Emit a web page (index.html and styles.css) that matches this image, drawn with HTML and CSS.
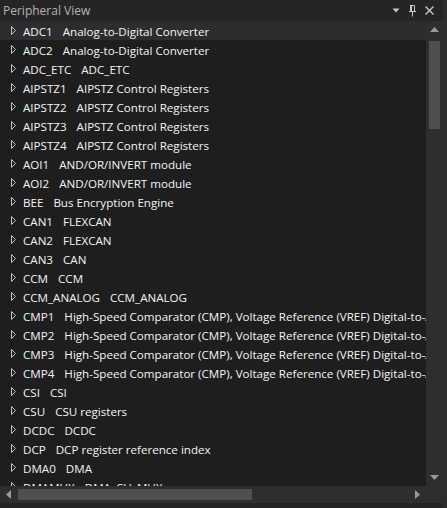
FILE: index.html
```
<!DOCTYPE html>
<html>
<head>
<meta charset="utf-8">
<link rel="stylesheet" href="styles.css">
</head>
<body>
<div class="window">
  <div class="titlebar">
    <span class="title">Peripheral View</span>
    <div class="title-btns">
      <svg class="tb-icon" width="8" height="5" viewBox="0 0 8 5"><polygon points="0.5,0.5 7.5,0.5 4,4.5" fill="#c8c8c8"/></svg>
      <svg class="tb-icon" width="9" height="12" viewBox="0 0 9 12"><path d="M2.5 0.5h4M3.5 0.5v6M6.5 0.5v6M1 6.5h7M4.5 6.5v5" stroke="#c8c8c8" fill="none" stroke-width="1"/><rect x="2" y="0" width="2" height="7" fill="#c8c8c8"/></svg>
      <svg class="tb-icon" width="9" height="9" viewBox="0 0 9 9"><path d="M0.5 0.5L8.5 8.5M8.5 0.5L0.5 8.5" stroke="#c8c8c8" stroke-width="1.4"/></svg>
    </div>
  </div>
  <div class="main">
    <div class="list">
      <div class="row selected"><svg class="exp" width="5" height="9" viewBox="0 0 5 9"><polygon points="0.5,0.5 4.5,4.5 0.5,8.5" fill="none" stroke="#c4c4c4" stroke-width="1"/></svg><span class="name">ADC1</span><span class="desc">Analog-to-Digital Converter</span></div>
      <div class="row"><svg class="exp" width="5" height="9" viewBox="0 0 5 9"><polygon points="0.5,0.5 4.5,4.5 0.5,8.5" fill="none" stroke="#c4c4c4" stroke-width="1"/></svg><span class="name">ADC2</span><span class="desc">Analog-to-Digital Converter</span></div>
      <div class="row"><svg class="exp" width="5" height="9" viewBox="0 0 5 9"><polygon points="0.5,0.5 4.5,4.5 0.5,8.5" fill="none" stroke="#c4c4c4" stroke-width="1"/></svg><span class="name">ADC_ETC</span><span class="desc">ADC_ETC</span></div>
      <div class="row"><svg class="exp" width="5" height="9" viewBox="0 0 5 9"><polygon points="0.5,0.5 4.5,4.5 0.5,8.5" fill="none" stroke="#c4c4c4" stroke-width="1"/></svg><span class="name">AIPSTZ1</span><span class="desc">AIPSTZ Control Registers</span></div>
      <div class="row"><svg class="exp" width="5" height="9" viewBox="0 0 5 9"><polygon points="0.5,0.5 4.5,4.5 0.5,8.5" fill="none" stroke="#c4c4c4" stroke-width="1"/></svg><span class="name">AIPSTZ2</span><span class="desc">AIPSTZ Control Registers</span></div>
      <div class="row"><svg class="exp" width="5" height="9" viewBox="0 0 5 9"><polygon points="0.5,0.5 4.5,4.5 0.5,8.5" fill="none" stroke="#c4c4c4" stroke-width="1"/></svg><span class="name">AIPSTZ3</span><span class="desc">AIPSTZ Control Registers</span></div>
      <div class="row"><svg class="exp" width="5" height="9" viewBox="0 0 5 9"><polygon points="0.5,0.5 4.5,4.5 0.5,8.5" fill="none" stroke="#c4c4c4" stroke-width="1"/></svg><span class="name">AIPSTZ4</span><span class="desc">AIPSTZ Control Registers</span></div>
      <div class="row"><svg class="exp" width="5" height="9" viewBox="0 0 5 9"><polygon points="0.5,0.5 4.5,4.5 0.5,8.5" fill="none" stroke="#c4c4c4" stroke-width="1"/></svg><span class="name">AOI1</span><span class="desc">AND/OR/INVERT module</span></div>
      <div class="row"><svg class="exp" width="5" height="9" viewBox="0 0 5 9"><polygon points="0.5,0.5 4.5,4.5 0.5,8.5" fill="none" stroke="#c4c4c4" stroke-width="1"/></svg><span class="name">AOI2</span><span class="desc">AND/OR/INVERT module</span></div>
      <div class="row"><svg class="exp" width="5" height="9" viewBox="0 0 5 9"><polygon points="0.5,0.5 4.5,4.5 0.5,8.5" fill="none" stroke="#c4c4c4" stroke-width="1"/></svg><span class="name">BEE</span><span class="desc">Bus Encryption Engine</span></div>
      <div class="row"><svg class="exp" width="5" height="9" viewBox="0 0 5 9"><polygon points="0.5,0.5 4.5,4.5 0.5,8.5" fill="none" stroke="#c4c4c4" stroke-width="1"/></svg><span class="name">CAN1</span><span class="desc">FLEXCAN</span></div>
      <div class="row"><svg class="exp" width="5" height="9" viewBox="0 0 5 9"><polygon points="0.5,0.5 4.5,4.5 0.5,8.5" fill="none" stroke="#c4c4c4" stroke-width="1"/></svg><span class="name">CAN2</span><span class="desc">FLEXCAN</span></div>
      <div class="row"><svg class="exp" width="5" height="9" viewBox="0 0 5 9"><polygon points="0.5,0.5 4.5,4.5 0.5,8.5" fill="none" stroke="#c4c4c4" stroke-width="1"/></svg><span class="name">CAN3</span><span class="desc">CAN</span></div>
      <div class="row"><svg class="exp" width="5" height="9" viewBox="0 0 5 9"><polygon points="0.5,0.5 4.5,4.5 0.5,8.5" fill="none" stroke="#c4c4c4" stroke-width="1"/></svg><span class="name">CCM</span><span class="desc">CCM</span></div>
      <div class="row"><svg class="exp" width="5" height="9" viewBox="0 0 5 9"><polygon points="0.5,0.5 4.5,4.5 0.5,8.5" fill="none" stroke="#c4c4c4" stroke-width="1"/></svg><span class="name">CCM_ANALOG</span><span class="desc">CCM_ANALOG</span></div>
      <div class="row"><svg class="exp" width="5" height="9" viewBox="0 0 5 9"><polygon points="0.5,0.5 4.5,4.5 0.5,8.5" fill="none" stroke="#c4c4c4" stroke-width="1"/></svg><span class="name">CMP1</span><span class="desc">High-Speed Comparator (CMP), Voltage Reference (VREF) Digital-to-Analog Converter (DAC), and Analog Mux (ANMUX)</span></div>
      <div class="row"><svg class="exp" width="5" height="9" viewBox="0 0 5 9"><polygon points="0.5,0.5 4.5,4.5 0.5,8.5" fill="none" stroke="#c4c4c4" stroke-width="1"/></svg><span class="name">CMP2</span><span class="desc">High-Speed Comparator (CMP), Voltage Reference (VREF) Digital-to-Analog Converter (DAC), and Analog Mux (ANMUX)</span></div>
      <div class="row"><svg class="exp" width="5" height="9" viewBox="0 0 5 9"><polygon points="0.5,0.5 4.5,4.5 0.5,8.5" fill="none" stroke="#c4c4c4" stroke-width="1"/></svg><span class="name">CMP3</span><span class="desc">High-Speed Comparator (CMP), Voltage Reference (VREF) Digital-to-Analog Converter (DAC), and Analog Mux (ANMUX)</span></div>
      <div class="row"><svg class="exp" width="5" height="9" viewBox="0 0 5 9"><polygon points="0.5,0.5 4.5,4.5 0.5,8.5" fill="none" stroke="#c4c4c4" stroke-width="1"/></svg><span class="name">CMP4</span><span class="desc">High-Speed Comparator (CMP), Voltage Reference (VREF) Digital-to-Analog Converter (DAC), and Analog Mux (ANMUX)</span></div>
      <div class="row"><svg class="exp" width="5" height="9" viewBox="0 0 5 9"><polygon points="0.5,0.5 4.5,4.5 0.5,8.5" fill="none" stroke="#c4c4c4" stroke-width="1"/></svg><span class="name">CSI</span><span class="desc">CSI</span></div>
      <div class="row"><svg class="exp" width="5" height="9" viewBox="0 0 5 9"><polygon points="0.5,0.5 4.5,4.5 0.5,8.5" fill="none" stroke="#c4c4c4" stroke-width="1"/></svg><span class="name">CSU</span><span class="desc">CSU registers</span></div>
      <div class="row"><svg class="exp" width="5" height="9" viewBox="0 0 5 9"><polygon points="0.5,0.5 4.5,4.5 0.5,8.5" fill="none" stroke="#c4c4c4" stroke-width="1"/></svg><span class="name">DCDC</span><span class="desc">DCDC</span></div>
      <div class="row"><svg class="exp" width="5" height="9" viewBox="0 0 5 9"><polygon points="0.5,0.5 4.5,4.5 0.5,8.5" fill="none" stroke="#c4c4c4" stroke-width="1"/></svg><span class="name">DCP</span><span class="desc">DCP register reference index</span></div>
      <div class="row"><svg class="exp" width="5" height="9" viewBox="0 0 5 9"><polygon points="0.5,0.5 4.5,4.5 0.5,8.5" fill="none" stroke="#c4c4c4" stroke-width="1"/></svg><span class="name">DMA0</span><span class="desc">DMA</span></div>
      <div class="row"><svg class="exp" width="5" height="9" viewBox="0 0 5 9"><polygon points="0.5,0.5 4.5,4.5 0.5,8.5" fill="none" stroke="#c4c4c4" stroke-width="1"/></svg><span class="name">DMAMUX</span><span class="desc">DMA_CH_MUX</span></div>
    </div>
    <div class="vscroll">
      <div class="arrow-btn"><svg width="9" height="5" viewBox="0 0 9 5"><polygon points="0,5 9,5 4.5,0" fill="#999"/></svg></div>
      <div class="vtrack"><div class="vthumb"></div></div>
      <div class="arrow-btn"><svg width="9" height="5" viewBox="0 0 9 5"><polygon points="0,0 9,0 4.5,5" fill="#999"/></svg></div>
    </div>
  </div>
  <div class="hbar">
    <div class="hscroll">
      <div class="harrow"><svg width="5" height="9" viewBox="0 0 5 9"><polygon points="5,0 5,9 0,4.5" fill="#999"/></svg></div>
      <div class="htrack"><div class="hthumb"></div></div>
      <div class="harrow"><svg width="5" height="9" viewBox="0 0 5 9"><polygon points="0,0 0,9 5,4.5" fill="#999"/></svg></div>
    </div>
    <div class="corner"></div>
  </div>
</div>
</body>
</html>
```
FILE: styles.css
```
html, body {
  margin: 0;
  padding: 0;
  background: #2d2d30;
}
.window {
  width: 443px;
  height: 508px;
  display: flex;
  flex-direction: column;
  background: #252526;
  font-family: "Open Sans", "Noto Sans", sans-serif;
  font-size: 12px;
  overflow: hidden;
}
.titlebar {
  height: 21px;
  flex: none;
  display: flex;
  align-items: center;
  justify-content: space-between;
  background: #252526;
}
.title {
  color: #b4b4b4;
  padding-left: 3px;
  font-size: 12px;
}
.title-btns {
  display: flex;
  align-items: center;
  gap: 8px;
  padding-right: 9px;
}
.tb-icon { display: block; }
.main {
  height: 465px;
  flex: none;
  display: flex;
}
.list {
  width: 426px;
  flex: none;
  background: #1e1e1e;
  overflow: hidden;
}
.row {
  height: 19px;
  display: flex;
  align-items: center;
  white-space: nowrap;
  color: #f4f4f4;
  font-size: 11.6px;
}
.row.selected { background: #2d2d30; }
.exp {
  flex: none;
  display: block;
  margin-left: 11px;
  margin-right: 7px;
}
.name {
  margin-right: 10px;
  padding-top: 1px;
}
.desc { padding-top: 1px; }
.vscroll {
  width: 17px;
  flex: none;
  background: #2e2e2e;
  display: flex;
  flex-direction: column;
}
.arrow-btn {
  height: 17px;
  flex: none;
  display: flex;
  align-items: center;
  justify-content: center;
}
.vtrack {
  flex: 1;
  padding: 0 3px;
}
.vthumb {
  height: 88px;
  margin-top: 3px;
  background: #4f4f4f;
}
.hbar {
  height: 17px;
  flex: none;
  display: flex;
  background: #2e2e2e;
}
.hscroll {
  width: 426px;
  flex: none;
  display: flex;
}
.harrow {
  width: 17px;
  flex: none;
  display: flex;
  align-items: center;
  justify-content: center;
}
.htrack {
  flex: 1;
  padding: 3px 0;
}
.hthumb {
  width: 234px;
  height: 100%;
  margin-left: 1px;
  background: #4f4f4f;
}
.corner {
  flex: 1;
}
```
